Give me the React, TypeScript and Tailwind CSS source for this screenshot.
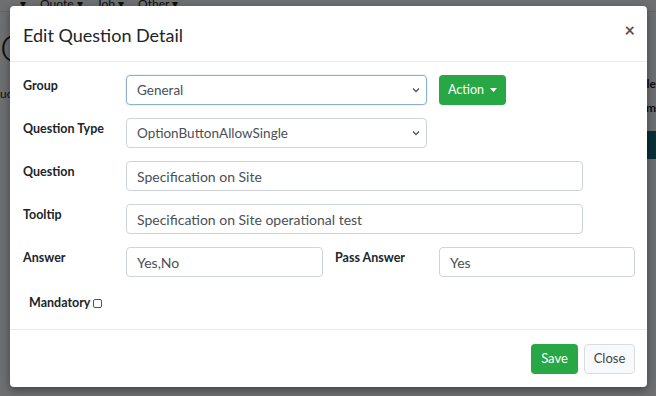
import React from 'react';

const font = { fontFamily: '"Source Sans Pro", Lato, "Noto Sans", sans-serif' };

function Chevron() {
  return (
    <svg width="8" height="6" viewBox="0 0 8 6" className="shrink-0">
      <path d="M1 1.5 L4 4.5 L7 1.5" fill="none" stroke="#555" strokeWidth="1.3" />
    </svg>
  );
}

function SelectBox({ value, focused }: { value: string; focused?: boolean }) {
  return (
    <div
      className={`w-[301px] h-[30px] rounded-[4px] border bg-white flex items-center justify-between pl-[10px] pr-[6px] text-[13.5px] text-[#495057] ${
        focused ? 'border-[#8fb0cf] shadow-[0_0_0_1px_rgba(128,170,210,0.15)]' : 'border-[#ced4da]'
      }`}
    >
      <span>{value}</span>
      <Chevron />
    </div>
  );
}

function TextBox({ value, width }: { value: string; width: string }) {
  return (
    <div className={`${width} h-[30px] rounded-[4px] border border-[#ced4da] bg-white flex items-center pl-[10px] text-[14px] text-[#495057]`}>
      {value}
    </div>
  );
}

function Label({ children }: { children: React.ReactNode }) {
  return <div className="w-[103px] shrink-0 pt-[2px] text-[12.5px] font-bold text-[#212529] leading-[18px]">{children}</div>;
}

export default function App() {
  return (
    <div className="relative w-[656px] h-[396px] overflow-hidden bg-[#f4f6f9]" style={font}>
      {/* Page behind the modal */}
      <div className="flex flex-col text-[#222]">
        <div className="h-[14px] flex items-center gap-[14px] pl-[20px] text-[12px] leading-none -mt-[3px]">
          <span>▾</span>
          <span>Quote ▾</span>
          <span>Job ▾</span>
          <span>Other ▾</span>
        </div>
        <div className="h-[74px] border-t border-[#ddd] pl-0 text-[38px] leading-[70px] font-light">Q</div>
        <div className="flex justify-between">
          <div className="text-[12px] pl-[0px]">uc</div>
          <div className="flex flex-col items-end text-[12px] font-bold pr-[0px] gap-[6px] -mt-[10px]">
            <span>cle</span>
            <span>m</span>
          </div>
        </div>
        <div className="flex justify-end mt-[14px]">
          <div className="w-[10px] h-[28px] bg-[#17697a]" />
        </div>
      </div>
      {/* Backdrop */}
      <div className="absolute inset-0 bg-black/55" />

      {/* Modal */}
      <div className="absolute left-[10px] top-[6px] w-[637px] h-[381px] rounded-[4px] bg-white flex flex-col shadow-[0_3px_8px_rgba(0,0,0,0.4)]">
        <div className="h-[56px] shrink-0 border-b border-[#e9ecef] flex items-center justify-between pl-[13px] pr-[12px]">
          <h4 className="text-[18px] text-[#212529] leading-none pt-[2px]">Edit Question Detail</h4>
          <span className="text-[18px] font-bold text-[#555] leading-none -mt-[8px]">×</span>
        </div>

        <div className="flex-1 flex flex-col pl-[13px] pt-[13px] gap-[13px]">
          <div className="flex items-start">
            <Label>Group</Label>
            <SelectBox value="General" focused />
            <button className="ml-[12px] h-[30px] w-[67px] rounded-[4px] bg-[#28a745] text-white text-[12.5px] flex items-center justify-center gap-[6px]">
              Action
              <svg width="7" height="4" viewBox="0 0 7 4">
                <path d="M0 0 L7 0 L3.5 4 Z" fill="#fff" />
              </svg>
            </button>
          </div>
          <div className="flex items-start">
            <Label>Question Type</Label>
            <SelectBox value="OptionButtonAllowSingle" />
          </div>
          <div className="flex items-start">
            <Label>Question</Label>
            <TextBox value="Specification on Site" width="w-[457px]" />
          </div>
          <div className="flex items-start">
            <Label>Tooltip</Label>
            <TextBox value="Specification on Site operational test" width="w-[457px]" />
          </div>
          <div className="flex items-start">
            <Label>Answer</Label>
            <TextBox value="Yes,No" width="w-[197px]" />
            <div className="ml-[12px] w-[104px] pt-[2px] text-[12.5px] font-bold text-[#212529] leading-[18px]">Pass Answer</div>
            <TextBox value="Yes" width="w-[196px]" />
          </div>
          <div className="flex items-center pl-[6px] pt-[4px] gap-[3px] text-[12.5px] font-bold text-[#212529]">
            Mandatory
            <span className="inline-block w-[9px] h-[9px] border border-[#555] rounded-[2px] bg-white" />
          </div>
        </div>

        <div className="h-[58px] shrink-0 border-t border-[#e9ecef] flex items-start justify-end gap-[6px] pr-[12px] pt-[14px]">
          <button className="h-[30px] w-[47px] rounded-[4px] bg-[#28a745] text-white text-[13px]">Save</button>
          <button className="h-[30px] w-[51px] rounded-[4px] bg-[#f8f9fa] border border-[#dadde0] text-[#444] text-[13px]">Close</button>
        </div>
      </div>
    </div>
  );
}
